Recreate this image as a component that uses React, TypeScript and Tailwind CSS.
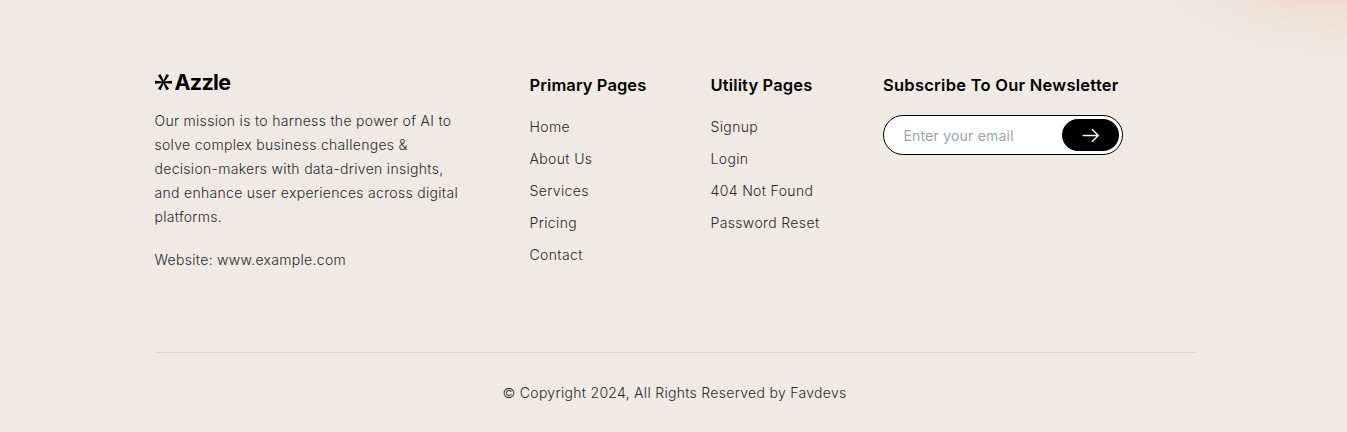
const primaryLinks = ['Home', 'About Us', 'Services', 'Pricing', 'Contact'];
const utilityLinks = ['Signup', 'Login', '404 Not Found', 'Password Reset'];

function Logo() {
  return (
    <div className="flex h-6 items-center gap-[3px] text-black">
      <svg width="17" height="17" viewBox="0 0 17 17" fill="currentColor" aria-hidden="true">
        <g transform="translate(8.5 8.2)">
          {[0, 60, 120, 180, 240, 300].map((angle) => (
            <path key={angle} transform={`rotate(${angle})`} d="M0 -0.7 L8.5 -1.5 V1.5 L0 0.7 Z" />
          ))}
        </g>
      </svg>
      <span className="text-[21.5px] leading-6 font-bold tracking-[-0.7px]">Azzle</span>
    </div>
  );
}

function Heading({ children, className }: { children: string; className: string }) {
  return <h3 className={`text-[16.5px] leading-6 font-semibold whitespace-nowrap text-black ${className}`}>{children}</h3>;
}

function Links({ items }: { items: string[] }) {
  return (
    <ul className="mt-[18px] flex flex-col gap-2 tracking-[0.36px]">
      {items.map((item) => (
        <li key={item} className="h-6">
          <a href="#" className="block whitespace-nowrap">{item}</a>
        </li>
      ))}
    </ul>
  );
}

export default function App() {
  return (
    <footer className="relative h-[432px] overflow-hidden bg-[#efeae3] font-['Inter',sans-serif] text-[14px] leading-6 font-light tracking-[0.3px] text-[#2a2a2a]">
      <div className="absolute -top-[232px] left-[1100px] h-[300px] w-[500px] bg-[radial-gradient(closest-side,#f6c5b8_0%,#f3d5cb_52%,#f1ddd3_61%,#efe3d9_71%,#efe7e1_82%,#efeae3_100%)]" />
      <div className="relative ml-[154.5px] w-[1040px] pt-[70px]">
        <div className="flex h-[282px]">
          <section className="w-[375px]">
            <Logo />
            <p className="mt-[15px] w-[315px]">
              Our mission is to harness the power of AI to<br />solve complex business challenges &amp;<br />decision-makers with data-driven insights,<br />and enhance user experiences across digital<br />platforms.
            </p>
            <p className="mt-[19px]">Website: www.example.com</p>
          </section>
          <nav className="w-[181px] pt-[3px]">
            <Heading className="tracking-[0.08px]">Primary Pages</Heading>
            <Links items={primaryLinks} />
          </nav>
          <nav className="w-[172.5px] pt-[3px]">
            <Heading className="tracking-[0.14px]">Utility Pages</Heading>
            <Links items={utilityLinks} />
          </nav>
          <section className="pt-[3px]">
            <Heading className="tracking-[0.26px]">Subscribe To Our Newsletter</Heading>
            <form className="mt-[18px] flex h-10 w-60 items-center rounded-full border border-black bg-white pr-[3px] pl-[19.5px]">
              <input
                type="email"
                aria-label="Email"
                placeholder="Enter your email"
                className="min-w-0 flex-1 pt-[2px] font-normal tracking-[0.2px] outline-none placeholder:text-[#9ca3af]"
              />
              <button type="button" aria-label="Subscribe" className="flex h-8 w-[57px] items-center justify-center rounded-full bg-black text-white">
                <svg width="17" height="14" viewBox="0 0 17 14" fill="none" stroke="currentColor" strokeWidth="1.4" strokeLinecap="round" strokeLinejoin="round">
                  <path d="M1.2 7.5H16M10.3 1.5L16.3 7.5L10.3 13.5" />
                </svg>
              </button>
            </form>
          </section>
        </div>
        <div className="border-t border-[#dcd7d0] pt-7 text-center">© Copyright 2024, All Rights Reserved by Favdevs</div>
      </div>
    </footer>
  );
}
